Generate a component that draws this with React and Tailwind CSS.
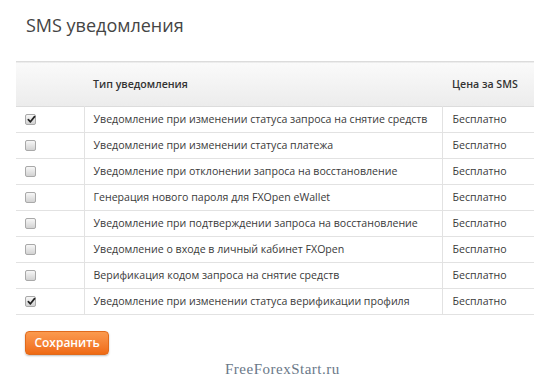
const rows = [
  { text: "Уведомление при изменении статуса запроса на снятие средств", checked: true },
  { text: "Уведомление при изменении статуса платежа", checked: false },
  { text: "Уведомление при отклонении запроса на восстановление", checked: false },
  { text: "Генерация нового пароля для FXOpen eWallet", checked: false },
  { text: "Уведомление при подтверждении запроса на восстановление", checked: false },
  { text: "Уведомление о входе в личный кабинет FXOpen", checked: false },
  { text: "Верификация кодом запроса на снятие средств", checked: false },
  { text: "Уведомление при изменении статуса верификации профиля", checked: true },
];

function Checkbox({ checked }) {
  return (
    <span className="relative block h-[11px] w-[11px] rounded-[2px] border border-[#a9a9a9] bg-gradient-to-b from-[#f7f7f7] to-[#d2d2d2]">
      {checked && (
        <svg viewBox="0 0 10 10" className="absolute left-[1px] top-[0px] h-[9px] w-[9px]">
          <path d="M1.5 5.2 L3.8 7.6 L8.4 1.8" fill="none" stroke="#222" strokeWidth="1.9" strokeLinecap="round" strokeLinejoin="round" />
        </svg>
      )}
    </span>
  );
}

export default function App() {
  return (
    <div className="relative h-[377px] w-[560px] overflow-hidden bg-white font-['Open_Sans',sans-serif] text-[#333]">
      <h1 className="pl-[26px] pt-[12px] text-[18px] leading-[26px] font-normal text-[#444]">SMS уведомления</h1>

      <table className="ml-[16px] mt-[23px] w-[518px] border-collapse text-[10.6px]">
        <thead>
          <tr className="h-[45px] border-t border-b border-[#dcdcdc] bg-gradient-to-b from-[#fafafa] to-[#ececec]">
            <th className="w-[68px]"></th>
            <th className="pl-[9px] pt-[1px] text-left font-semibold">Тип уведомления</th>
            <th className="w-[92px] pl-[10px] pt-[1px] text-left font-semibold">Цена за SMS</th>
          </tr>
        </thead>
        <tbody>
          {rows.map((row, i) => (
            <tr key={i} className="h-[26px] border-b border-[#e2e2e2]">
              <td className="border-r border-[#e2e2e2] pl-[9px]">
                <Checkbox checked={row.checked} />
              </td>
              <td className="border-r border-[#e2e2e2] pl-[9px] text-[#3a3a3a]">{row.text}</td>
              <td className="pl-[10px] text-[#3a3a3a]">Бесплатно</td>
            </tr>
          ))}
        </tbody>
      </table>

      <button
        type="button"
        className="ml-[25px] mt-[16px] h-[24px] w-[84px] rounded-[4px] border border-[#e06a1c] bg-gradient-to-b from-[#fb9a4e] to-[#ef6a12] text-[12px] font-semibold text-white shadow-[0_1px_2px_rgba(0,0,0,0.25)]"
      >
        Сохранить
      </button>

      <div className="absolute left-[225px] top-[360px] font-['Liberation_Serif',serif] text-[15px] leading-[18px] tracking-[0.5px] text-[#6a7888]">
        FreeForexStart.ru
      </div>
    </div>
  );
}
